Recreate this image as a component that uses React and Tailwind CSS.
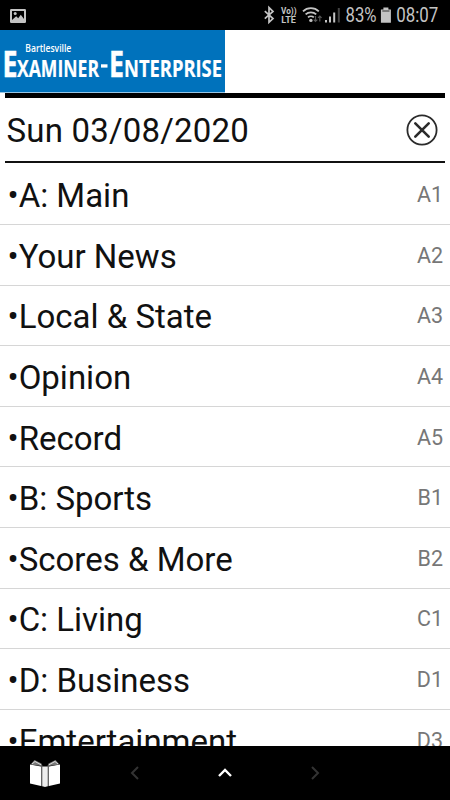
const SECTIONS = [
  { name: 'A: Main', page: 'A1' },
  { name: 'Your News', page: 'A2' },
  { name: 'Local & State', page: 'A3' },
  { name: 'Opinion', page: 'A4' },
  { name: 'Record', page: 'A5' },
  { name: 'B: Sports', page: 'B1' },
  { name: 'Scores & More', page: 'B2' },
  { name: 'C: Living', page: 'C1' },
  { name: 'D: Business', page: 'D1' },
  { name: 'Emtertainment', page: 'D3' },
];

function StatusBar() {
  return (
    <div className="h-[30px] shrink-0 bg-black flex items-center justify-between">
      <svg className="ml-2.5 mt-px" width="16" height="14" viewBox="0 0 16 14">
        <rect width="16" height="14" rx="1.2" fill="#c4c4c4" />
        <path d="M2 2h12v8l-3.2-4.2-2.6 3.4-2-2L2 11z" fill="#000" />
        <circle cx="5.2" cy="4.6" r="1.5" fill="#c4c4c4" />
      </svg>
      {/* bluetooth, volte, wifi, signal, battery */}
      <svg width="188" height="30" viewBox="262 0 188 30" fontFamily="Roboto, sans-serif" fill="#c4c4c4">
        <path d="M264.8 11.2l8.2 7.3-4 3.8V7.6l4 3.8-8.2 7.3" fill="none" stroke="#c4c4c4" strokeWidth="1.7" />
        <text x="281" y="14" fontSize="9" fontWeight="700" textLength="15.5" lengthAdjust="spacingAndGlyphs">Vo))</text>
        <text x="281.3" y="22.6" fontSize="9.5" fontWeight="700" textLength="14.5" lengthAdjust="spacingAndGlyphs">LTE</text>
        <g fill="none" stroke="#c4c4c4" strokeWidth="1.8">
          <path d="M303 11.3c4.4-4.300 11.400-4.300 15.800 0" />
          <path d="M305.6 14.400c3-2.800 7.600-2.800 10.600 0" />
          <path d="M308 17.4c1.600-1.500 4.200-1.500 5.800 0" />
        </g>
        <circle cx="310.9" cy="20.4" r="1.7" />
        <path d="M315.5 16v5.5m-1.8-1.8l1.8 1.8 1.8-1.8M319.8 21.5V16m-1.8 1.8l1.8-1.8 1.8 1.8" fill="none" stroke="#555" strokeWidth="1.2" />
        <rect x="325" y="20" width="2" height="2.5" />
        <rect x="329" y="16.5" width="2" height="6" />
        <rect x="333.2" y="12.5" width="2" height="10" />
        <rect x="337.8" y="8" width="2" height="14.5" fill="#444" />
        <text x="345.5" y="22.4" fontSize="19.5" textLength="31" lengthAdjust="spacingAndGlyphs">83%</text>
        <path d="M383.4 7.5h5v2h2.5v13.2h-10V9.5h2.5z" />
        <path d="M382.3 11h7.2" stroke="#333" strokeWidth="1" />
        <text x="396.3" y="22.4" fontSize="19.5" textLength="42" lengthAdjust="spacingAndGlyphs">08:07</text>
      </svg>
    </div>
  );
}

function Logo() {
  return (
    <svg className="block shrink-0" width="225" height="63" viewBox="0 0 225 63" fontFamily="'Open Sans', sans-serif" fill="#fff">
      <rect width="225" height="62.4" fill="#0072bc" />
      <text x="25.3" y="22.3" fontSize="10.5" fontWeight="600" textLength="46" lengthAdjust="spacingAndGlyphs">Bartlesville</text>
      <g fontWeight="700" stroke="#fff">
        <text x="2.5" y="46.6" fontSize="36" textLength="15" lengthAdjust="spacingAndGlyphs" strokeWidth="0.5">E</text>
        <text x="17" y="46.6" fontSize="23.5" textLength="82" lengthAdjust="spacingAndGlyphs" strokeWidth="0.2">XAMINER</text>
        <rect x="101" y="34.300" width="6.5" height="3.3" stroke="none" />
        <text x="109" y="46.6" fontSize="36" textLength="15" lengthAdjust="spacingAndGlyphs" strokeWidth="0.5">E</text>
        <text x="124" y="46.6" fontSize="23.5" textLength="98" lengthAdjust="spacingAndGlyphs" strokeWidth="0.2">NTERPRISE</text>
      </g>
    </svg>
  );
}

function DateHeader() {
  return (
    <div className="mx-[5px] h-[70px] shrink-0 border-t-[5px] border-b-2 border-t-black border-b-[#111] flex items-center justify-between">
      <h1 className="pl-[1.5px] pt-0.5 text-[33px] leading-[40px] tracking-[0.2px]">Sun 03/08/2020</h1>
      <button className="mr-[7px]">
        <svg width="32" height="32" viewBox="0 0 32 32" fill="none" stroke="#2b2b2b">
          <circle cx="16" cy="16" r="14.6" strokeWidth="1.8" />
          <path d="M9.3 9.3l13.4 13.4M22.7 9.3L9.3 22.7" strokeWidth="2.6" strokeLinecap="round" />
        </svg>
      </button>
    </div>
  );
}

function SectionRow({ name, page }) {
  return (
    <li className="h-[60.6px] shrink-0 border-b border-[#d6d6d6] flex items-center justify-between pl-[7.5px] pr-[7px]">
      <span className="text-[33px] leading-[40px] pt-1 whitespace-nowrap">•{name}</span>
      <span className="text-[21.5px] leading-[28px] pt-0.5 text-[#777]">{page}</span>
    </li>
  );
}

function BottomNav() {
  return (
    <nav className="h-[54px] shrink-0 bg-black grid grid-cols-5 items-center justify-items-center">
      <svg width="32" height="29" viewBox="0 0 32 29">
        <path d="M1 5.5l11 2V27L1 24.5zM31 5.5l-11 2V27l11-2.5z" fill="#fff" />
        <path d="M12.5 7.5h7V27L16 28l-3.500-1z" fill="#eee" />
        <path d="M1.5 5.5L5.5 1l7 3.500V7zM30.5 5.5L26.5 1l-7 3.500V7z" fill="#777" />
        <path d="M3 5l3-2.500 6.500 3.500M29 5l-3-2.500-6.500 3.500" fill="none" stroke="#ddd" strokeWidth="1" />
        <path d="M12.7 6v21M19.3 6v21" stroke="#666" strokeWidth="1.3" />
      </svg>
      <svg width="14" height="16" viewBox="0 0 14 16" fill="none" stroke="#333" strokeWidth="2">
        <path d="M10 2L4 8l6 6" />
      </svg>
      <svg width="16" height="14" viewBox="0 0 16 14" fill="none" stroke="#fff" strokeWidth="2.4">
        <path d="M2 10l6-6 6 6" />
      </svg>
      <svg width="14" height="16" viewBox="0 0 14 16" fill="none" stroke="#333" strokeWidth="2">
        <path d="M4 2l6 6-6 6" />
      </svg>
    </nav>
  );
}

export default function App() {
  return (
    <div className="w-[450px] h-[800px] flex flex-col overflow-hidden bg-white text-[#111] font-['Roboto',sans-serif]">
      <StatusBar />
      <Logo />
      <DateHeader />
      <ul className="flex-1 min-h-0 flex flex-col overflow-hidden pt-[1.5px]">
        {SECTIONS.map(section => (
          <SectionRow key={section.page} name={section.name} page={section.page} />
        ))}
      </ul>
      <BottomNav />
    </div>
  );
}
